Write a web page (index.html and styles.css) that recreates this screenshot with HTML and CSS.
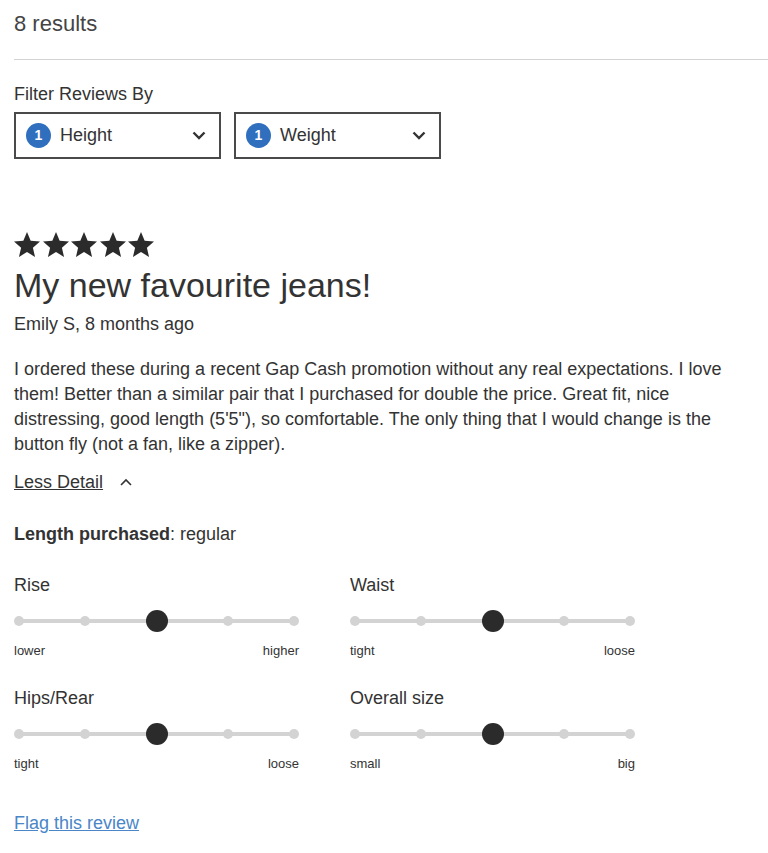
FILE: index.html
```html
<!DOCTYPE html>
<html lang="en">
<head>
    <meta charset="UTF-8">
    <meta name="viewport" content="width=device-width, initial-scale=1.0">
    <title>Reviews</title>

    <link rel="stylesheet" href="styles.css">
</head>
<body>
    <div class="results">8 results</div>

    <div class="filters">
        <div class="filters-title">Filter Reviews By</div>
        <div class="filters-row">
            <button class="filter-btn">
                <span class="badge">1</span>
                <span class="filter-name">Height</span>
                <svg class="chev" width="14" height="9" viewBox="0 0 14 9"><path d="M1.5 1.5 L7 7 L12.5 1.5" fill="none" stroke="#333" stroke-width="2.4"/></svg>
            </button>
            <button class="filter-btn">
                <span class="badge">1</span>
                <span class="filter-name">Weight</span>
                <svg class="chev" width="14" height="9" viewBox="0 0 14 9"><path d="M1.5 1.5 L7 7 L12.5 1.5" fill="none" stroke="#333" stroke-width="2.4"/></svg>
            </button>
        </div>
    </div>

    <div class="review">
        <div class="stars">
            <svg width="26" height="25" viewBox="1 1 22 21"><polygon points="12,1 15.1,8.3 23,9 17,14.2 18.8,22 12,17.9 5.2,22 7,14.2 1,9 8.9,8.3" fill="#2b2b2b"/></svg>
            <svg width="26" height="25" viewBox="1 1 22 21"><polygon points="12,1 15.1,8.3 23,9 17,14.2 18.8,22 12,17.9 5.2,22 7,14.2 1,9 8.9,8.3" fill="#2b2b2b"/></svg>
            <svg width="26" height="25" viewBox="1 1 22 21"><polygon points="12,1 15.1,8.3 23,9 17,14.2 18.8,22 12,17.9 5.2,22 7,14.2 1,9 8.9,8.3" fill="#2b2b2b"/></svg>
            <svg width="26" height="25" viewBox="1 1 22 21"><polygon points="12,1 15.1,8.3 23,9 17,14.2 18.8,22 12,17.9 5.2,22 7,14.2 1,9 8.9,8.3" fill="#2b2b2b"/></svg>
            <svg width="26" height="25" viewBox="1 1 22 21"><polygon points="12,1 15.1,8.3 23,9 17,14.2 18.8,22 12,17.9 5.2,22 7,14.2 1,9 8.9,8.3" fill="#2b2b2b"/></svg>
        </div>

        <h2 class="review-title">My new favourite jeans!</h2>
        <div class="review-author">Emily S, 8 months ago</div>

        <p class="review-text">I ordered these during a recent Gap Cash promotion without any real expectations. I love them! Better than a similar pair that I purchased for double the price. Great fit, nice distressing, good length (5'5"), so comfortable. The only thing that I would change is the button fly (not a fan, like a zipper).</p>

        <div class="less">
            <a href="#">Less Detail</a>
            <svg class="chev-up" width="14" height="9" viewBox="0 0 14 9"><path d="M2 7 L7 2 L12 7" fill="none" stroke="#333" stroke-width="1.6"/></svg>
        </div>

        <div class="length"><b>Length purchased</b>: regular</div>

        <div class="fit-grid">
            <div class="fit">
                <div class="fit-name">Rise</div>
                <div class="slider">
                    <span class="dot"></span><span class="dot"></span><span class="dot on"></span><span class="dot"></span><span class="dot"></span>
                </div>
                <div class="fit-ends"><span>lower</span><span>higher</span></div>
            </div>
            <div class="fit">
                <div class="fit-name">Waist</div>
                <div class="slider">
                    <span class="dot"></span><span class="dot"></span><span class="dot on"></span><span class="dot"></span><span class="dot"></span>
                </div>
                <div class="fit-ends"><span>tight</span><span>loose</span></div>
            </div>
            <div class="fit">
                <div class="fit-name">Hips/Rear</div>
                <div class="slider">
                    <span class="dot"></span><span class="dot"></span><span class="dot on"></span><span class="dot"></span><span class="dot"></span>
                </div>
                <div class="fit-ends"><span>tight</span><span>loose</span></div>
            </div>
            <div class="fit">
                <div class="fit-name">Overall size</div>
                <div class="slider">
                    <span class="dot"></span><span class="dot"></span><span class="dot on"></span><span class="dot"></span><span class="dot"></span>
                </div>
                <div class="fit-ends"><span>small</span><span>big</span></div>
            </div>
        </div>

        <a class="flag" href="#">Flag this review</a>
    </div>
</body>
</html>
```

FILE: styles.css
```css
body {
    font-family: "Liberation Sans", Arial, sans-serif;
    margin: 0;
    padding: 0 0 0 14px;
    background-color: #fff;
    color: #333;
}

.results {
    font-size: 22px;
    line-height: 26px;
    padding: 11px 0 22px;
    border-bottom: 1px solid #d4d4d4;
    color: #444;
}

.filters-title {
    font-size: 18px;
    line-height: 22px;
    margin-top: 23px;
}

.filters-row {
    display: flex;
    gap: 13px;
    margin-top: 7px;
}

.filter-btn {
    display: flex;
    align-items: center;
    width: 207px;
    height: 47px;
    box-sizing: border-box;
    padding: 0 13px 0 10px;
    border: 2px solid #4a4a4a;
    background: #fff;
    font-family: inherit;
    color: #333;
    cursor: pointer;
}

.badge {
    width: 25px;
    height: 25px;
    border-radius: 50%;
    background-color: #2f6fbd;
    color: #fff;
    font-size: 14px;
    font-weight: bold;
    line-height: 25px;
    text-align: center;
    flex-shrink: 0;
}

.filter-name {
    font-size: 18px;
    margin-left: 9px;
    flex: 1;
    text-align: left;
}

.review {
    margin-top: 73px;
}

.stars {
    display: flex;
    gap: 2.5px;
    height: 25px;
}

.review-title {
    font-size: 34px;
    font-weight: normal;
    line-height: 38px;
    margin: 9px 0 0;
}

.review-author {
    font-size: 18px;
    line-height: 22px;
    margin-top: 9px;
}

.review-text {
    font-size: 18px;
    line-height: 25px;
    margin: 22px 0 0;
    max-width: 740px;
}

.less {
    display: flex;
    align-items: center;
    gap: 16px;
    margin-top: 14px;
    font-size: 18px;
    line-height: 22px;
}

.less a {
    color: #333;
}

.length {
    font-size: 18px;
    line-height: 22px;
    margin-top: 30px;
}

.fit-grid {
    display: grid;
    grid-template-columns: 336px 336px;
    row-gap: 28px;
    margin-top: 29px;
}

.fit-name {
    font-size: 18px;
    line-height: 22px;
}

.slider {
    position: relative;
    width: 285px;
    height: 22px;
    margin-top: 14px;
    display: flex;
    align-items: center;
    justify-content: space-between;
}

.slider::before {
    content: "";
    position: absolute;
    left: 5px;
    right: 5px;
    top: 9px;
    height: 4px;
    background-color: #d3d3d3;
}

.dot {
    position: relative;
    width: 10px;
    height: 10px;
    border-radius: 50%;
    background-color: #d3d3d3;
}

.dot.on {
    width: 22px;
    height: 22px;
    background-color: #2b2b2b;
}

.fit-ends {
    width: 285px;
    display: flex;
    justify-content: space-between;
    font-size: 13px;
    line-height: 16px;
    margin-top: 11px;
}

.flag {
    display: inline-block;
    margin-top: 40px;
    font-size: 18px;
    line-height: 22px;
    color: #4a86c8;
}
```
